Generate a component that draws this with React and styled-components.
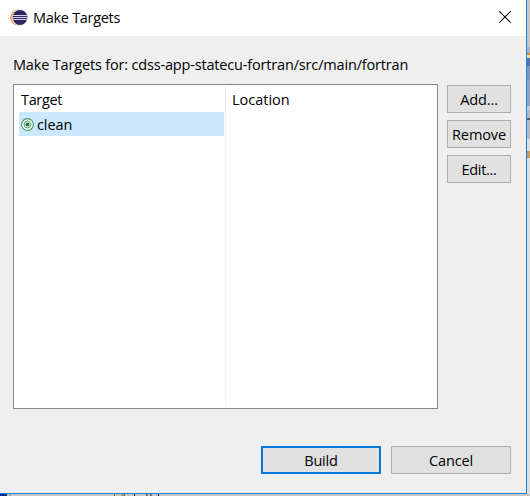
import React from "react";
import styled, { createGlobalStyle } from "styled-components";

const Global = createGlobalStyle`
  * { box-sizing: border-box; }
  body { margin: 0; overflow: hidden; font-family: "Open Sans", "Noto Sans", sans-serif; font-size: 14.5px; color: #000; }
`;

const Screen = styled.div`
  display: grid;
  grid-template: 494px 2px / 527px 3px;
  width: 530px;
  height: 496px;
`;

const Dialog = styled.main`
  display: flex;
  flex-direction: column;
  background: #efefef;
  border: solid #1883d7;
  border-width: 0 1px 1px 0;
`;

const TitleBar = styled.header`
  height: 36px;
  display: flex;
  align-items: center;
  padding: 0 15px 1px 10px;
  background: #fff;
  svg { display: block; flex: none; }
`;

const Label = styled.span`
  display: block;
  white-space: pre;
  line-height: 20px;
  letter-spacing: ${(p) => p.$track ?? -0.17}px;
`;

const Title = styled(Label)`
  flex: 1;
  margin-left: 5px;
`;

const Body = styled.section`
  padding: 19px 15px 0 13px;
  display: flex;
  flex-direction: column;
`;

const Content = styled.div`
  margin-top: 9px;
  display: flex;
  gap: 9px;
`;

const Table = styled.div`
  width: 425px;
  height: 325px;
  display: grid;
  grid-template-columns: 206px 1px 1fr;
  padding: 1px 0 1px 5px;
  border: 1px solid #828790;
  background: #fff;
`;

const Column = styled.div`
  display: flex;
  flex-direction: column;
`;

const Heading = styled.div`
  height: 26px;
  padding: 4px 0 0 ${(p) => p.$inset}px;
`;

const Divider = styled.div`
  background: linear-gradient(#e5e5e5 26px, #edf4fb 26px);
`;

const TargetRow = styled.div`
  height: 24px;
  margin-right: 1px;
  display: flex;
  align-items: center;
  gap: 3px;
  padding: 1px 0 0 2px;
  background: #cce8ff;
`;

const Side = styled.div`
  display: flex;
  flex-direction: column;
  gap: 7px;
  padding-top: 1px;
`;

const Button = styled.button`
  width: ${(p) => p.$width}px;
  height: 28px;
  display: flex;
  align-items: center;
  justify-content: center;
  padding: 1px 0 0;
  font: inherit;
  color: #000;
  background: #e1e1e1;
  border: ${(p) => (p.$primary ? "2px solid #0078d7" : "1px solid #adadad")};
`;

const Footer = styled.footer`
  display: flex;
  justify-content: flex-end;
  gap: 10px;
  margin-top: 37px;
`;

const EdgeRight = styled.div`
  background: linear-gradient(
    #c9c5c4 0 47px, #aeb4c2 47px 53px, #d98c3a 53px 55px, #f2dca5 55px 58px,
    #5872ad 58px 66px, #8096bb 66px 80px, #93a4c2 80px 106px, #c8ccd4 106px 110px, #b6b9c0 110px 118px,
    #555a62 118px 120px, #b6b9c0 120px 139px, #dedede 139px 151px, #c99a5c 151px 158px, #dedede 158px
  );
`;

const EdgeBottom = styled.div`
  grid-column: 1 / -1;
  background: linear-gradient(
    90deg, #00308f 0 6px, #16356f 6px 7px, #b8bdc6 7px 10px, #8d939c 10px 11px, #c6c6c6 11px 114px,
    #8a6a20 114px 115px, #c6c6c6 115px 121px, #a89a70 121px 124px, #8a6a20 124px 125px, #c6c6c6 125px 134px,
    #3a1030 134px 135px, #c6c6c6 135px 146px, #9a5010 146px 147px, #4f87ad 147px 148px, #c6c6c6 148px 150px,
    #9a5010 150px 151px, #4f87ad 151px 152px, #c6c6c6 152px 158px, #2a1040 158px 159px, #c6c6c6 159px
  );
`;

const EclipseIcon = () => (
  <svg width="18" height="17" viewBox="0 0 18 17">
    <circle cx="8.3" cy="8.5" r="8.1" fill="#f1983b" />
    <circle cx="9.6" cy="8.5" r="8.2" fill="#f4e3d8" />
    <circle cx="10" cy="8.5" r="7.5" fill="#2f2860" />
    <path d="M3 6.5h14M2.4 8.5h15.2M3 10.5h14" stroke="#d7d5e5" strokeWidth="1.1" />
  </svg>
);

const CloseIcon = () => (
  <svg width="12" height="14" viewBox="0 0 12 14">
    <path d="M.3.3l11.4 11.4M11.7.3L.3 11.7" stroke="#000" strokeWidth="1.1" />
  </svg>
);

const TargetIcon = () => (
  <svg width="13" height="13" viewBox="0 0 13 13">
    <circle cx="6.5" cy="6.5" r="5.9" fill="#fff" stroke="#4d9a6c" strokeWidth="1.2" />
    <circle cx="6.5" cy="6.5" r="3.4" fill="#fff" stroke="#4d9a6c" />
    <circle cx="6.5" cy="6.5" r="2" fill="#217a3d" />
  </svg>
);

export default function App() {
  return (
    <Screen>
      <Global />
      <Dialog>
        <TitleBar>
          <EclipseIcon />
          <Title $track={-0.3}>Make Targets</Title>
          <CloseIcon />
        </TitleBar>
        <Body>
          <Label>Make Targets for: cdss-app-statecu-fortran/src/main/fortran</Label>
          <Content>
            <Table>
              <Column>
                <Heading $inset={2}><Label $track={-0.35}>Target</Label></Heading>
                <TargetRow><TargetIcon /><Label $track={-0.1}>clean</Label></TargetRow>
              </Column>
              <Divider />
              <Column>
                <Heading $inset={6}><Label $track={0}>Location</Label></Heading>
              </Column>
            </Table>
            <Side>
              <Button $width={64}><Label $track={-0.1}>Add...</Label></Button>
              <Button $width={64}><Label $track={-0.1}>Remove</Label></Button>
              <Button $width={64}><Label $track={-0.3}>Edit...</Label></Button>
            </Side>
          </Content>
          <Footer>
            <Button $width={120} $primary><Label>Build</Label></Button>
            <Button $width={120}><Label>Cancel</Label></Button>
          </Footer>
        </Body>
      </Dialog>
      <EdgeRight />
      <EdgeBottom />
    </Screen>
  );
}
